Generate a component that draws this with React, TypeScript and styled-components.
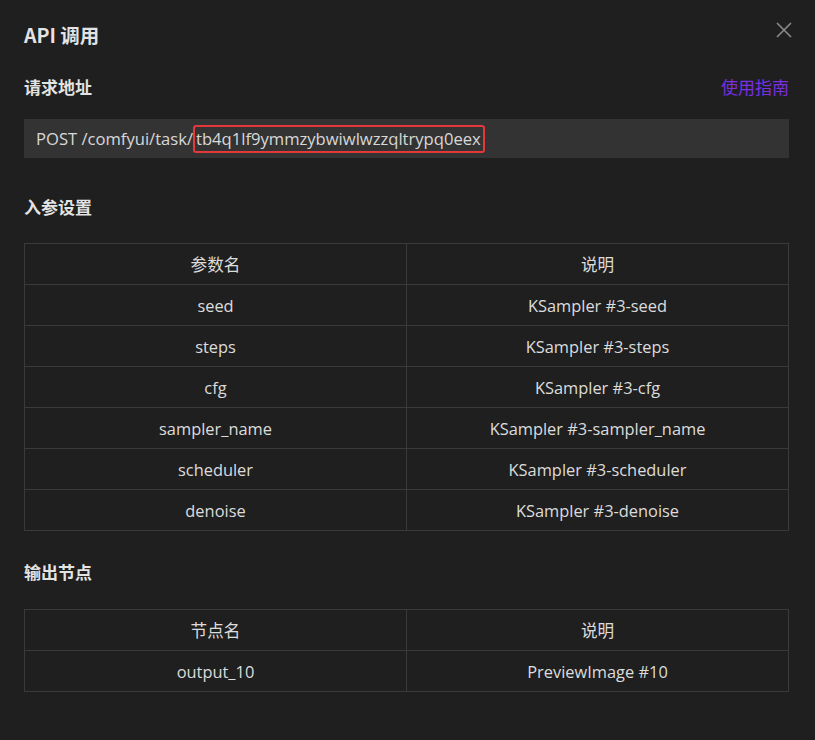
import styled, { createGlobalStyle } from "styled-components";

const GlobalStyle = createGlobalStyle`
  html, body {
    margin: 0;
    padding: 0;
    background: #1f1f1f;
  }
  body {
    font-family: "Open Sans", "Noto Sans", "Noto Sans CJK SC", sans-serif;
    color: rgba(255, 255, 255, 0.85);
  }
`;

const Modal = styled.div`
  width: 815px;
  height: 740px;
  box-sizing: border-box;
  padding: 21px 26px 0 24px;
  background: #1f1f1f;
  position: relative;
`;

const Title = styled.h1`
  margin: 0;
  font-size: 19.5px;
  font-weight: 700;
  line-height: 28px;
  color: rgba(255, 255, 255, 0.88);
  font-family: "Noto Sans CJK SC", sans-serif;
`;

const CloseBtn = styled.button`
  position: absolute;
  top: 19px;
  right: 20px;
  width: 22px;
  height: 22px;
  padding: 0;
  border: none;
  background: transparent;
  display: flex;
  align-items: center;
  justify-content: center;
  cursor: pointer;
`;

const SectionHead = styled.div<{ $top: number }>`
  display: flex;
  justify-content: space-between;
  align-items: center;
  margin-top: ${(p) => p.$top}px;
  height: 24px;
`;

const SectionTitle = styled.h2`
  margin: 0;
  font-size: 17px;
  font-weight: 700;
  color: rgba(255, 255, 255, 0.88);
  font-family: "Noto Sans CJK SC", sans-serif;
`;

const GuideLink = styled.a`
  font-size: 17px;
  color: #7b2fe3;
  text-decoration: none;
  font-family: "Noto Sans CJK SC", sans-serif;
  cursor: pointer;
`;

const UrlBox = styled.div`
  margin-top: 21px;
  height: 39px;
  background: #333333;
  display: flex;
  align-items: center;
  padding-left: 12px;
  font-size: 16.6px;
  color: rgba(255, 255, 255, 0.82);
`;

const Highlight = styled.span`
  border: 2px solid #e5383b;
  border-radius: 3px;
  padding: 0 2px 0 1px;
  line-height: 24px;
`;

const Table = styled.table<{ $top: number }>`
  margin-top: ${(p) => p.$top}px;
  width: 100%;
  border-collapse: collapse;
  table-layout: fixed;
  font-size: 16.4px;
`;

const Cell = styled.td`
  height: 40px;
  padding: 0;
  border: 1px solid #3a3a3a;
  text-align: center;
  color: rgba(255, 255, 255, 0.85);
`;

const HeadCell = styled(Cell).attrs({ as: "th" })`
  font-weight: 400;
  font-size: 16.6px;
  font-family: "Noto Sans CJK SC", sans-serif;
`;

const inputParams = [
  ["seed", "KSampler #3-seed"],
  ["steps", "KSampler #3-steps"],
  ["cfg", "KSampler #3-cfg"],
  ["sampler_name", "KSampler #3-sampler_name"],
  ["scheduler", "KSampler #3-scheduler"],
  ["denoise", "KSampler #3-denoise"],
];

const outputNodes = [["output_10", "PreviewImage #10"]];

function DataTable({ head, rows, top }: { head: string; rows: string[][]; top: number }) {
  return (
    <Table $top={top}>
      <thead>
        <tr>
          <HeadCell>{head}</HeadCell>
          <HeadCell>说明</HeadCell>
        </tr>
      </thead>
      <tbody>
        {rows.map(([name, desc]) => (
          <tr key={name}>
            <Cell>{name}</Cell>
            <Cell>{desc}</Cell>
          </tr>
        ))}
      </tbody>
    </Table>
  );
}

function App() {
  return (
    <>
      <GlobalStyle />
      <Modal>
        <Title>API 调用</Title>
        <CloseBtn aria-label="close">
          <svg width="18" height="18" viewBox="0 0 18 18">
            <path d="M2 2L16 16M16 2L2 16" stroke="#8a8a8a" strokeWidth="1.6" />
          </svg>
        </CloseBtn>

        <SectionHead $top={25}>
          <SectionTitle>请求地址</SectionTitle>
          <GuideLink>使用指南</GuideLink>
        </SectionHead>
        <UrlBox>
          POST /comfyui/task/
          <Highlight>tb4q1lf9ymmzybwiwlwzzqltrypq0eex</Highlight>
        </UrlBox>

        <SectionHead $top={36}>
          <SectionTitle>入参设置</SectionTitle>
        </SectionHead>
        <DataTable head="参数名" rows={inputParams} top={25} />

        <SectionHead $top={28}>
          <SectionTitle>输出节点</SectionTitle>
        </SectionHead>
        <DataTable head="节点名" rows={outputNodes} top={26} />
      </Modal>
    </>
  );
}

export default App;
